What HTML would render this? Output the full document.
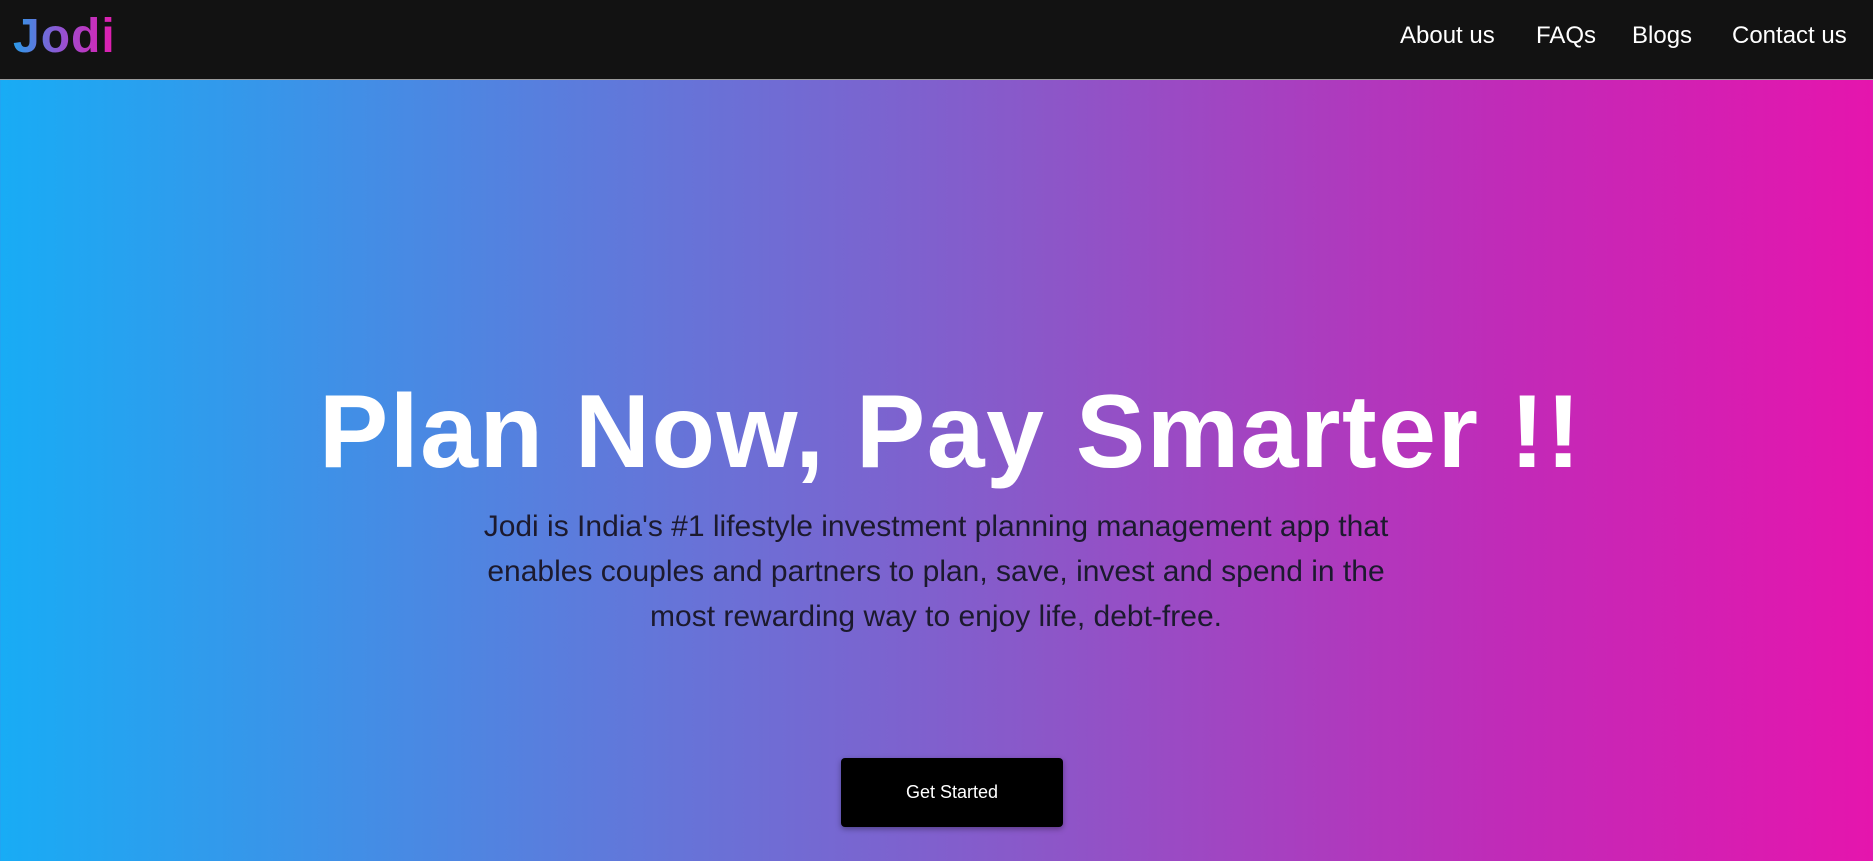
<!DOCTYPE html>
<html><head><meta charset="utf-8"><style>
*{margin:0;padding:0;box-sizing:border-box}
body{width:1873px;height:861px;overflow:hidden;font-family:"Liberation Sans",sans-serif;background:linear-gradient(90deg,#18acf5 0%,#5a7ddd 30%,#8a58c9 55%,#c02bb8 80%,#e515ad 100%)}
nav{position:absolute;left:0;top:0;width:1873px;height:80px;background:#121212;border-bottom:1px solid #9a9a9a}
.logo{position:absolute;left:13px;top:9px;font-size:48px;font-weight:bold;background:linear-gradient(90deg,#2a9be8,#9a4fd0 50%,#e51aad);-webkit-background-clip:text;background-clip:text;color:transparent;letter-spacing:1px}
.links a{position:absolute;top:22px;color:#fff;font-size:24px;text-decoration:none}
h1{position:absolute;left:14px;width:1873px;top:372px;text-align:center;color:#fff;font-size:104px;font-weight:bold;line-height:120px;letter-spacing:1.5px}
p{position:absolute;left:336px;width:1200px;top:504px;text-align:center;color:#1c1a2e;font-size:30px;line-height:45px;white-space:nowrap}
.btn{position:absolute;left:841px;top:758px;width:222px;height:69px;background:#000;border-radius:4px;color:#fff;font-size:18px;display:flex;align-items:center;justify-content:center;box-shadow:0 2px 6px rgba(0,0,0,.35)}
</style></head><body>
<nav><div class="logo">Jodi</div>
<div class="links"><a style="left:1400px">About us</a><a style="left:1536px">FAQs</a><a style="left:1632px">Blogs</a><a style="left:1732px">Contact us</a></div></nav>
<h1>Plan Now, Pay Smarter !!</h1>
<p>Jodi is India's #1 lifestyle investment planning management app that<br>enables couples and partners to plan, save, invest and spend in the<br>most rewarding way to enjoy life, debt-free.</p>
<div class="btn">Get Started</div>
</body></html>
